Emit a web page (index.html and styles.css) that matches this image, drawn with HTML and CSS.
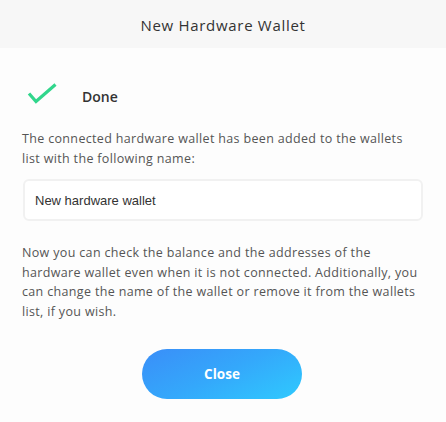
FILE: index.html
```html
<!DOCTYPE html>
<html>
<head>
<meta charset="utf-8">
<link rel="stylesheet" href="styles.css">
</head>
<body>
<div class="modal">
  <div class="header">New Hardware Wallet</div>
  <div class="content">
    <div class="done-row">
      <svg class="check" width="30" height="22" viewBox="0 0 30 22">
        <path d="M2 10.5 L9 18.5 L28.5 1.5" fill="none" stroke="#31d68c" stroke-width="3.2" stroke-linecap="butt" stroke-linejoin="miter"/>
      </svg>
      <span class="done-text">Done</span>
    </div>
    <p class="text first">The connected hardware wallet has been added to the wallets list with the following name:</p>
    <div class="name-box">New hardware wallet</div>
    <p class="text second">Now you can check the balance and the addresses of the hardware wallet even when it is not connected. Additionally, you can change the name of the wallet or remove it from the wallets list, if you wish.</p>
    <div class="actions">
      <button class="close-btn">Close</button>
    </div>
  </div>
</div>
</body>
</html>
```
FILE: styles.css
```css
html, body {
  margin: 0;
  padding: 0;
  background: #fdfdfd;
}
body {
  width: 446px;
  height: 422px;
  overflow: hidden;
  font-family: "Open Sans", "Liberation Sans", sans-serif;
}
.header {
  height: 48px;
  background: #f7f7f7;
  color: #333;
  font-size: 15px;
  letter-spacing: 0.7px;
  display: flex;
  align-items: center;
  justify-content: center;
  padding-top: 1px;
  box-sizing: border-box;
}
.content {
  padding: 0 22px 0 22px;
}
.done-row {
  display: flex;
  align-items: center;
  height: 36px;
  margin-top: 30px;
}
.check {
  margin-left: 5px;
  margin-top: -4px;
}
.done-text {
  margin-left: 25px;
  font-size: 14px;
  font-weight: 600;
  color: #333;
}
.text {
  margin: 0;
  font-size: 12.5px;
  letter-spacing: 0.34px;
  line-height: 19.5px;
  color: #555;
}
.first {
  margin-top: 15px;
}
.name-box {
  margin-top: 11px;
  margin-left: 1px;
  margin-right: 1px;
  height: 42px;
  box-sizing: border-box;
  border: 2px solid #f1f1f1;
  border-radius: 6px;
  background: #fff;
  display: flex;
  align-items: center;
  padding-left: 10px;
  font-family: "Liberation Sans", Arial, sans-serif;
  font-size: 13px;
  color: #333;
}
.second {
  margin-top: 22px;
}
.actions {
  display: flex;
  justify-content: center;
  margin-top: 28px;
}
.close-btn {
  width: 160px;
  height: 50px;
  border: none;
  border-radius: 25px;
  background: linear-gradient(155deg, #3a8ef8 0%, #34a8fb 50%, #2fcafe 100%);
  color: #fff;
  font-family: "Open Sans", "Liberation Sans", sans-serif;
  font-size: 13.5px;
  font-weight: 700;
  margin-left: -2px;
}
```
